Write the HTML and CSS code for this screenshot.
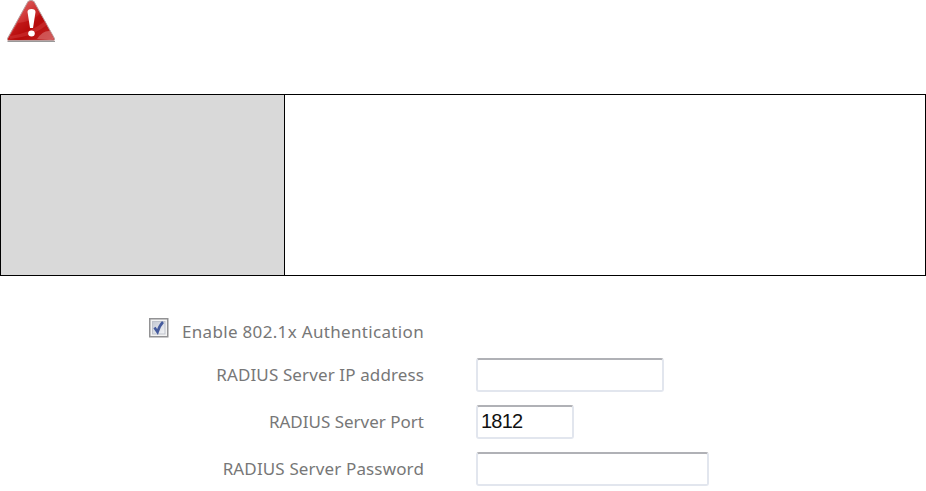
FILE: index.html
```html
<!DOCTYPE html>
<html lang="en">
<head>
<meta charset="utf-8">
<title>RADIUS settings</title>
<link rel="stylesheet" href="styles.css">
</head>
<body>
<div class="notice">
  <svg class="warning" width="50" height="44" viewBox="0 0 50 44" role="img" aria-label="Warning">
    <defs>
      <linearGradient id="red" x1="0" y1="0" x2="1" y2="1">
        <stop offset="0" stop-color="#e58080"/>
        <stop offset=".4" stop-color="#cf3434"/>
        <stop offset=".6" stop-color="#b50d0d"/>
        <stop offset="1" stop-color="#cf5555"/>
      </linearGradient>
    </defs>
    <path d="M.5 41.5H48" stroke="#999" stroke-width="1"/>
    <path d="M21 1.500Q24-1 27 1.500L47.500 38.500Q48 40.500 46.500 40.500H1.500Q0 40.500 .5 38.500Z" fill="url(#red)" stroke="#b9a0a0" stroke-width="1"/>
    <path d="M11 23Q24 22 33 14L46 37Q45.500 39.500 43.500 39.500H3L2 38.500Q3 37 11 23Z" fill="#b80808" opacity=".6"/>
    <path d="M3 36Q24 33 38 21L40 25Q25 37 3 39Z" fill="#d64545" opacity=".4"/>
    <path d="M30 39Q36 30 43 31L46.500 38Q45.500 40 43.500 40Z" fill="#e28b8b" opacity=".5"/>
    <path d="M20.500 12Q20.500 9 24.500 9T28.500 12L26 28H23Z" fill="#fff"/>
    <ellipse cx="24.500" cy="33.500" rx="3.300" ry="2.900" fill="#fff"/>
  </svg>
</div>
<div class="panel"><div class="panel-name"></div><div class="panel-text"></div></div>
<form class="settings">
  <div class="row">
    <label class="name" for="auth"><svg class="check" id="auth" width="20" height="20" viewBox="0 0 20 20">
      <defs><linearGradient id="box" x1="0" y1="0" x2="1" y2="1"><stop offset="0" stop-color="#c3c8d3"/><stop offset="1" stop-color="#f4f5f7"/></linearGradient></defs>
      <rect x=".75" y=".75" width="18" height="18" fill="#f3f3f3" stroke="#929294" stroke-width="1.500"/>
      <rect x="3.500" y="3.500" width="12.500" height="12.500" fill="url(#box)" stroke="#bec2cb"/>
      <path d="M5.500 9.500L8.500 14Q10.500 7.500 14 4" fill="none" stroke="#455b9d" stroke-width="2.600"/>
    </svg><span class="t1">Enable 802.1x Authentication</span></label>
  </div>
  <div class="row"><label class="name" for="ip"><span class="t2">RADIUS Server IP address</span></label><input id="ip" class="ip" type="text"></div>
  <div class="row"><label class="name" for="port"><span class="t3">RADIUS Server Port</span></label><input id="port" class="port" type="text" value="1812"></div>
  <div class="row"><label class="name" for="password"><span class="t4">RADIUS Server Password</span></label><input id="password" class="password" type="password"></div>
</form>
</body>
</html>
```
FILE: styles.css
```css
* { box-sizing: border-box; }
body { margin: 0; height: 491px; overflow: hidden; background: #fff; }
.notice { height: 94px; padding-left: 7px; }
.warning { display: block; }
.panel { display: flex; width: 926px; height: 182px; border: 1px solid #000; }
.panel-name { width: 284px; background: #d9d9d9; border-right: 1px solid #000; }
.panel-text { flex: 1; }
.settings { padding-top: 33px; }
.row { display: flex; align-items: center; height: 47px; }
.row:first-child { height: 42px; }
.name { display: flex; justify-content: flex-end; width: 424px; margin-right: 52px; font: 17px/24px "Noto Sans", sans-serif; color: #777; white-space: nowrap; }
.check { margin: 1px 13px 0 0; }
.t1 { padding-top: 3px; letter-spacing: .33px; }
.t2 { letter-spacing: .12px; }
.t4 { letter-spacing: .14px; }
input { height: 34px; margin: 0; padding: 0 3px; border: 2px solid #e2e6ee; border-top-color: #b0b1b6; border-radius: 3px; background: #fff; font: 20px "Liberation Sans", Arial, sans-serif; letter-spacing: -.8px; color: #111; outline: 0; }
.ip { width: 188px; }
.port { width: 98px; }
.password { width: 233px; }
```
